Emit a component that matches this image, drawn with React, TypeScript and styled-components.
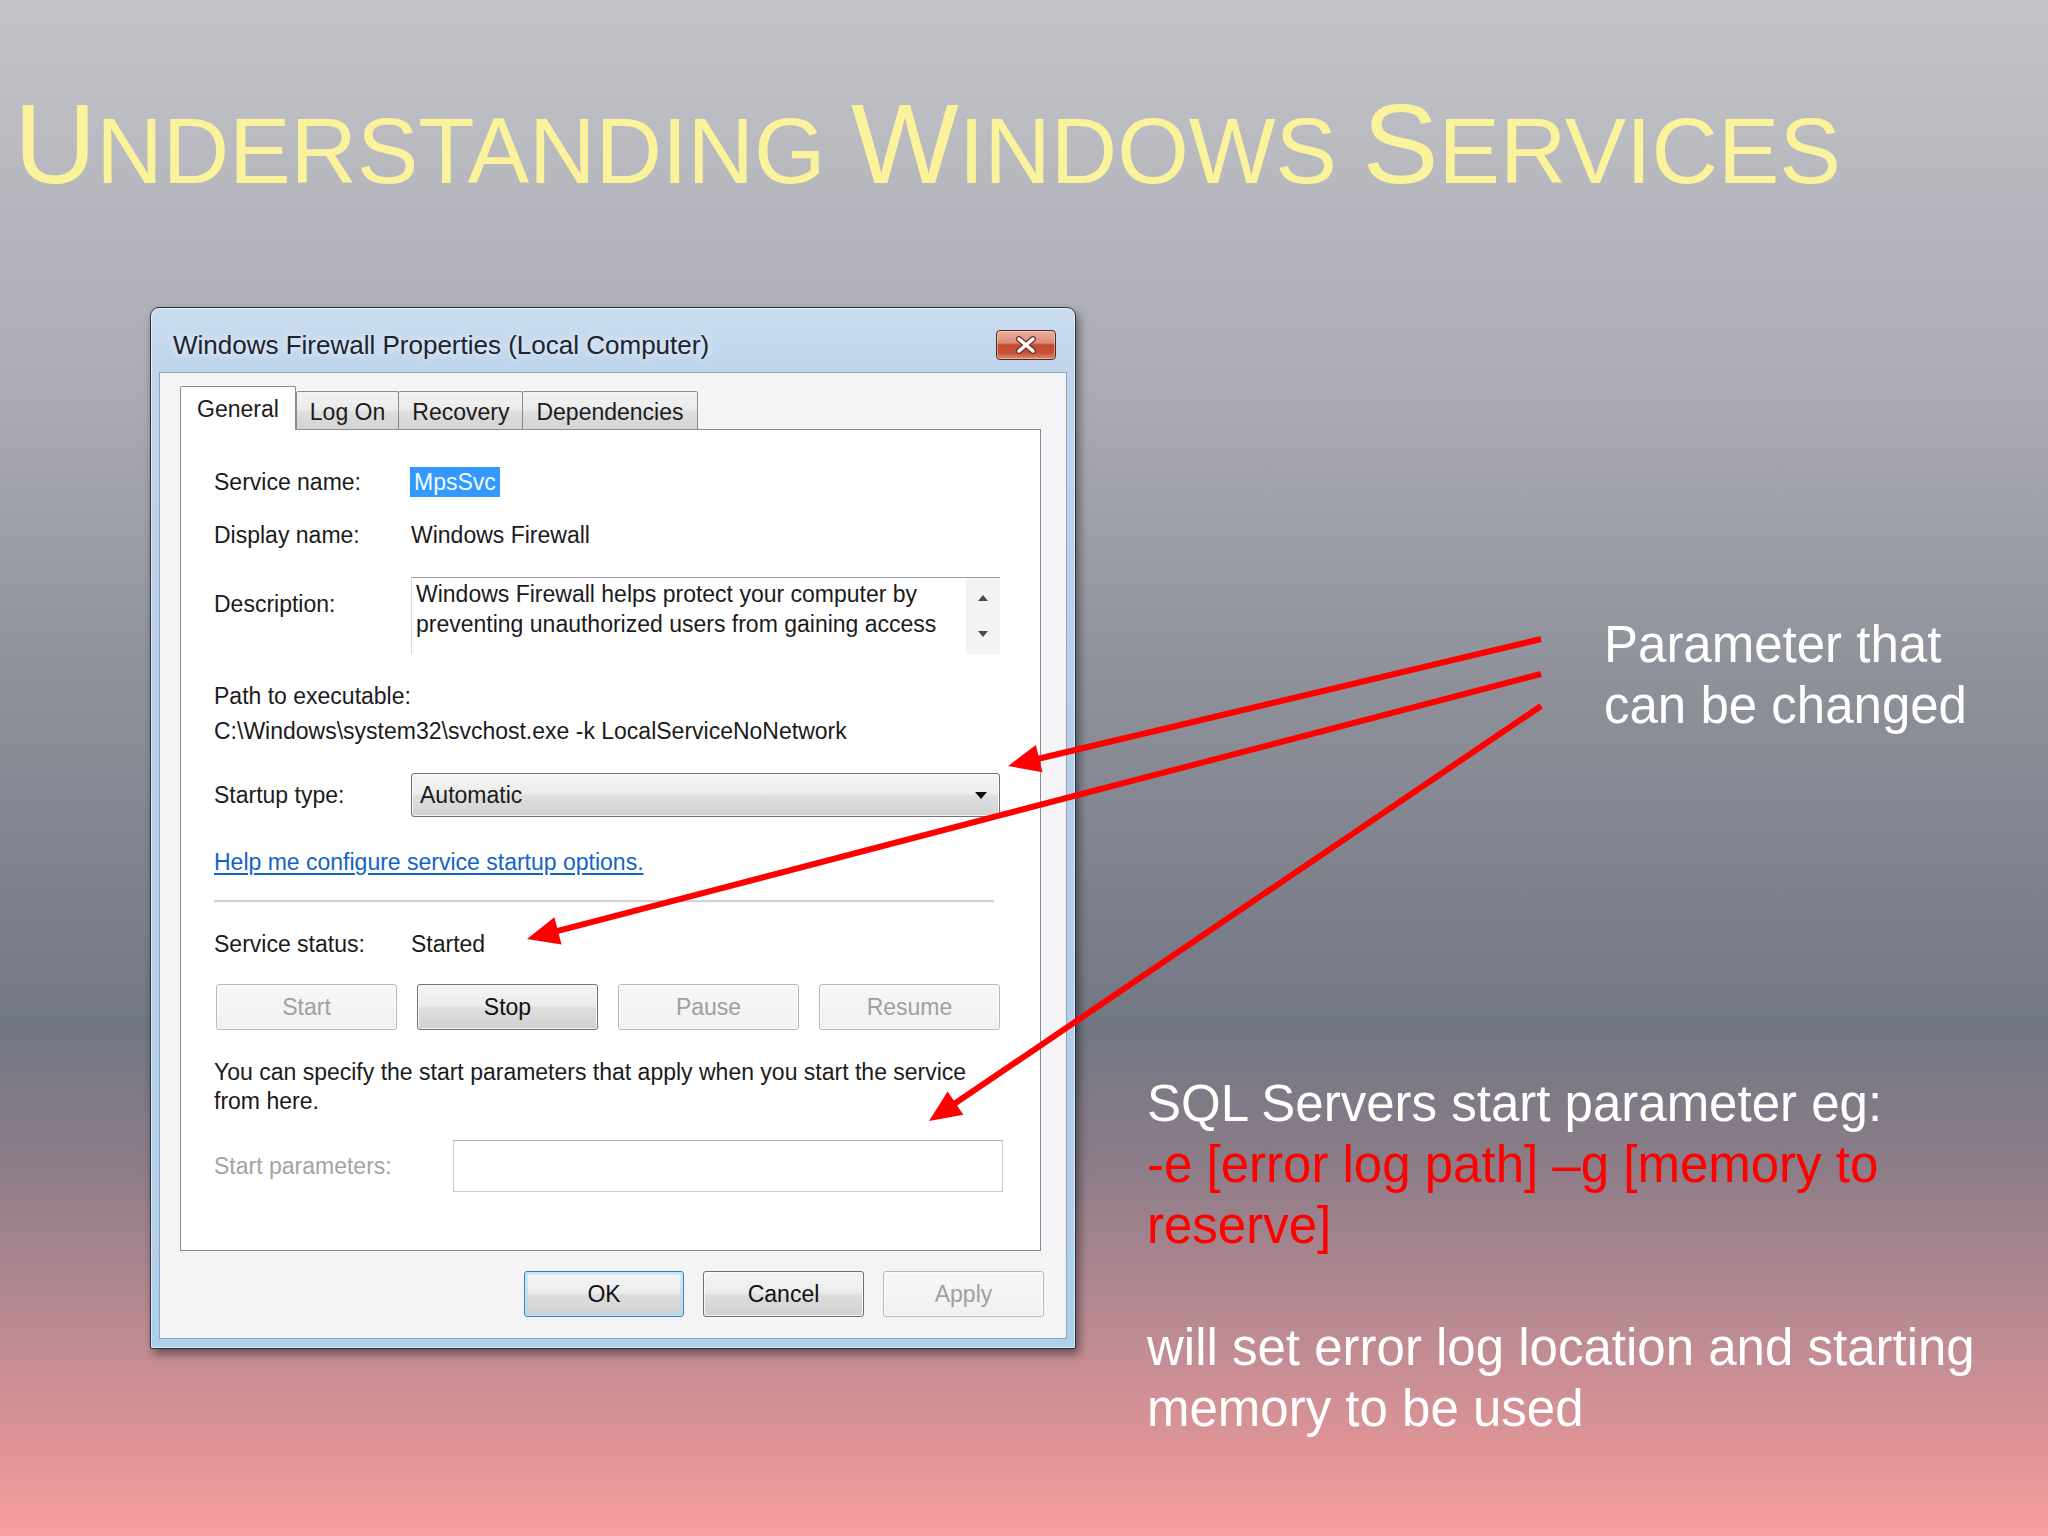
import styled, { createGlobalStyle } from 'styled-components';

const GlobalStyle = createGlobalStyle`
  html, body {
    margin: 0;
    padding: 0;
  }
  body {
    width: 2048px;
    height: 1536px;
    overflow: hidden;
    font-family: "Liberation Sans", Arial, sans-serif;
  }
`

const Slide = styled.div`
  position: relative;
  width: 2048px;
  height: 1536px;
  overflow: hidden;
  font-family: "Liberation Sans", Arial, sans-serif;
  background: linear-gradient(180deg, #c3c3c9 0%, #abacb4 25%, #8e9099 45%, #727784 67%, #8c7d88 76%, #b98a92 86%, #e29597 95%, #f7a19f 100%);
`

const Title = styled.h1`
  margin: 0;
  padding: 86px 0 0 14px;
  height: 115px;
  font-size: 114px;
  font-weight: normal;
  line-height: 115px;
  color: #fbf39b;
  white-space: nowrap;
`
const Cap = styled.span`
  font-size: 114px;
`
const SmallCap = styled.span`
  font-size: 92px;
`

const Body = styled.div`
  display: flex;
  align-items: flex-start;
  margin-top: 106px;
`

/* ---------- the Vista dialog ---------- */

const Window = styled.div`
  box-sizing: border-box;
  margin-left: 150px;
  width: 926px;
  height: 1042px;
  display: flex;
  flex-direction: column;
  border: 1px solid #2c323c;
  border-radius: 9px 9px 2px 2px;
  background: linear-gradient(180deg, #cadcef 0%, #bfd5ec 6%, #b6cfe9 40%, #b3cfea 90%, #a9d0ec 100%);
  box-shadow: inset 0 0 0 1px rgba(255, 255, 255, 0.55), 3px 5px 10px rgba(0, 0, 0, 0.45);
`
const TitleBar = styled.div`
  height: 64px;
  flex: none;
  box-sizing: border-box;
  display: flex;
  justify-content: space-between;
  align-items: flex-start;
  padding: 22px 19px 0 22px;
`
const Caption = styled.div`
  font-size: 26px;
  line-height: 30px;
  color: #1c2430;
  text-shadow: 0 0 8px rgba(255, 255, 255, 0.9);
`
const CloseButton = styled.div`
  box-sizing: border-box;
  width: 60px;
  height: 30px;
  display: flex;
  align-items: center;
  justify-content: center;
  border: 1px solid #4a2a22;
  border-radius: 4px;
  background: linear-gradient(180deg, #eab0a2 0%, #dc8c78 42%, #c44a2f 50%, #c6513a 78%, #e28c68 100%);
  box-shadow: inset 0 0 0 1px rgba(255, 220, 200, 0.5);
`

const Client = styled.div`
  box-sizing: border-box;
  flex: 1;
  margin: 0 8px 9px 8px;
  padding: 13px 25px 0 20px;
  display: flex;
  flex-direction: column;
  background: #f4f3f5;
  border: 1px solid #8ea5c1;
  font-size: 23px;
  color: #1b1b1b;
`

const TabStrip = styled.div`
  display: flex;
  align-items: flex-end;
  height: 44px;
  flex: none;
  margin-bottom: -1px;
  position: relative;
  z-index: 1;
`
const Tab = styled.div<{ $active?: boolean }>`
  box-sizing: border-box;
  height: ${p => (p.$active ? 44 : 39)}px;
  padding: ${p => (p.$active ? '0 16px' : '2px 13px 0')};
  margin-left: ${p => (p.$active ? 0 : -1)}px;
  display: flex;
  align-items: center;
  border: 1px solid #898c95;
  border-bottom: ${p => (p.$active ? 'none' : '1px solid #898c95')};
  border-radius: 2px 2px 0 0;
  background: ${p => (p.$active ? '#ffffff' : 'linear-gradient(180deg, #f3f3f3 0%, #ebebeb 48%, #dedede 52%, #d4d4d4 100%)')};
  line-height: 30px;
  &:nth-child(2) {
    margin-left: 0;
  }
`

const Panel = styled.div`
  box-sizing: border-box;
  height: 822px;
  flex: none;
  border: 1px solid #898c95;
  background: #ffffff;
  padding: 37px 40px 0 33px;
  display: flex;
  flex-direction: column;
`

const Field = styled.div<{ $gap?: number; $label?: number; $top?: boolean }>`
  display: grid;
  grid-template-columns: ${p => p.$label ?? 197}px 1fr;
  align-items: ${p => (p.$top ? 'start' : 'center')};
  margin-top: ${p => p.$gap ?? 0}px;
  line-height: 30px;
`
const Line = styled.div<{ $gap?: number }>`
  margin-top: ${p => p.$gap ?? 0}px;
  line-height: 30px;
  white-space: nowrap;
`
const Label = styled.div<{ $dim?: boolean; $pad?: number }>`
  color: ${p => (p.$dim ? '#a3a3a3' : '#1b1b1b')};
  padding-top: ${p => p.$pad ?? 0}px;
  white-space: nowrap;
`
const Selected = styled.span`
  display: inline-block;
  padding: 0 4px;
  margin-left: -1px;
  background: #3399ff;
  color: #f4faff;
`

const DescBox = styled.div`
  box-sizing: border-box;
  height: 77px;
  display: flex;
  border-top: 1px solid #9fa2a8;
  border-left: 1px solid #d6d9df;
  background: #ffffff;
`
const DescText = styled.div`
  flex: 1;
  padding: 1px 0 0 4px;
  line-height: 30px;
  white-space: nowrap;
  overflow: hidden;
`
const ScrollBar = styled.div`
  width: 34px;
  flex: none;
  display: flex;
  flex-direction: column;
  align-items: center;
  gap: 30px;
  padding-top: 17px;
  background: #f3f3f4;
`
const ScrollArrow = styled.div<{ $down?: boolean }>`
  width: 0;
  height: 0;
  border-left: 5px solid transparent;
  border-right: 5px solid transparent;
  ${p => (p.$down ? 'border-top: 6px solid #4a4a4a;' : 'border-bottom: 6px solid #4a4a4a;')}
`

const ComboBox = styled.div`
  box-sizing: border-box;
  height: 44px;
  display: flex;
  align-items: center;
  justify-content: space-between;
  padding: 0 12px 0 8px;
  border: 1px solid #707070;
  border-radius: 3px;
  background: linear-gradient(180deg, #f4f4f4 0%, #ececec 48%, #dfdfdf 52%, #d2d2d2 100%);
  box-shadow: inset 0 0 0 1px rgba(255, 255, 255, 0.7);
`
const DropArrow = styled.div`
  width: 0;
  height: 0;
  border-left: 6px solid transparent;
  border-right: 6px solid transparent;
  border-top: 7px solid #111;
`

const HelpLink = styled.a`
  color: #1463c8;
  text-decoration: underline;
  text-underline-offset: 3px;
  cursor: pointer;
`

const Separator = styled.div`
  margin-top: 23px;
  margin-right: 6px;
  height: 2px;
  background: #d2d2d2;
  border-bottom: 1px solid #f6f6f6;
`

const ButtonRow = styled.div<{ $gap?: number }>`
  display: grid;
  grid-template-columns: repeat(4, 1fr);
  gap: 20px;
  margin-top: ${p => p.$gap ?? 0}px;
  padding-left: 2px;
`
const UIButton = styled.div<{ $kind?: 'normal' | 'disabled' | 'default'; $w?: number }>`
  box-sizing: border-box;
  height: 46px;
  ${p => (p.$w ? `width: ${p.$w}px;` : '')}
  display: flex;
  align-items: center;
  justify-content: center;
  border-radius: 3px;
  border: 1px solid ${p => (p.$kind === 'disabled' ? '#b5b9bc' : p.$kind === 'default' ? '#3c7fb1' : '#707070')};
  color: ${p => (p.$kind === 'disabled' ? '#a0a0a0' : '#111111')};
  background: ${p =>
    p.$kind === 'disabled'
      ? 'linear-gradient(180deg, #f7f7f7 0%, #f1f1f1 100%)'
      : 'linear-gradient(180deg, #f4f4f4 0%, #ececec 48%, #dedede 52%, #d0d0d0 100%)'};
  box-shadow: ${p =>
    p.$kind === 'default'
      ? 'inset 0 0 0 1px #bfe8fb, inset 0 0 0 3px rgba(160, 220, 250, 0.5)'
      : 'inset 0 0 0 1px rgba(255, 255, 255, 0.75)'};
`

const Paragraph = styled.div`
  margin-top: 28px;
  line-height: 29px;
  white-space: nowrap;
`
const ParamInput = styled.div`
  box-sizing: border-box;
  height: 52px;
  margin-right: -3px;
  background: #ffffff;
  border: 1px solid #c9ccd1;
  border-top-color: #a9acb2;
`

const Footer = styled.div`
  display: flex;
  justify-content: flex-end;
  gap: 19px;
  margin-top: 20px;
  margin-right: -3px;
`

/* ---------- slide notes ---------- */

const Notes = styled.div`
  display: flex;
  flex-direction: column;
  padding-left: 71px;
  margin-top: 307px;
  color: #ffffff;
  font-size: 51px;
  line-height: 61px;
  white-space: nowrap;
`
const Note = styled.div<{ $indent?: number; $gap?: number }>`
  padding-left: ${p => p.$indent ?? 0}px;
  margin-top: ${p => p.$gap ?? 0}px;
`
const Red = styled.span`
  color: #ff0000;
`

const Overlay = styled.svg`
  position: absolute;
  left: 0;
  top: 0;
  pointer-events: none;
`

type ArrowProps = { x1: number; y1: number; x2: number; y2: number };

const Arrow = ({ x1, y1, x2, y2 }: ArrowProps) => {
  const dx = x2 - x1;
  const dy = y2 - y1;
  const len = Math.hypot(dx, dy);
  const ux = dx / len;
  const uy = dy / len;
  const head = 32;
  const half = 14;
  const bx = x2 - ux * head;
  const by = y2 - uy * head;
  const px = -uy * half;
  const py = ux * half;
  return (
    <g>
      <line x1={x1} y1={y1} x2={bx + ux * 4} y2={by + uy * 4} stroke="#ff0000" strokeWidth={6} />
      <polygon points={`${x2},${y2} ${bx + px},${by + py} ${bx - px},${by - py}`} fill="#ff0000" />
    </g>
  );
};

const App = () => {
  return (
    <Slide>
      <GlobalStyle />
      <Title>
        <Cap>U</Cap><SmallCap>NDERSTANDING </SmallCap>
        <Cap>W</Cap><SmallCap>INDOWS </SmallCap>
        <Cap>S</Cap><SmallCap>ERVICES</SmallCap>
      </Title>

      <Body>
        <Window>
          <TitleBar>
            <Caption>Windows Firewall Properties (Local Computer)</Caption>
            <CloseButton>
              <svg width="24" height="18" viewBox="0 0 24 18">
                <path d="M5 3 L19 15 M19 3 L5 15" stroke="#6b3327" strokeWidth="6" strokeLinecap="round" />
                <path d="M5 3 L19 15 M19 3 L5 15" stroke="#ffffff" strokeWidth="3.5" strokeLinecap="round" />
              </svg>
            </CloseButton>
          </TitleBar>

          <Client>
            <TabStrip>
              <Tab $active>General</Tab>
              <Tab>Log On</Tab>
              <Tab>Recovery</Tab>
              <Tab>Dependencies</Tab>
            </TabStrip>

            <Panel>
              <Field>
                <Label>Service name:</Label>
                <div><Selected>MpsSvc</Selected></div>
              </Field>
              <Field $gap={23}>
                <Label>Display name:</Label>
                <div>Windows Firewall</div>
              </Field>
              <Field $gap={27} $top>
                <Label $pad={12}>Description:</Label>
                <DescBox>
                  <DescText>
                    Windows Firewall helps protect your computer by<br />
                    preventing unauthorized users from gaining access
                  </DescText>
                  <ScrollBar>
                    <ScrollArrow />
                    <ScrollArrow $down />
                  </ScrollBar>
                </DescBox>
              </Field>
              <Line $gap={27}>Path to executable:</Line>
              <Line $gap={5}>C:\Windows\system32\svchost.exe -k LocalServiceNoNetwork</Line>
              <Field $gap={27}>
                <Label>Startup type:</Label>
                <ComboBox>
                  <span>Automatic</span>
                  <DropArrow />
                </ComboBox>
              </Field>
              <Line $gap={30}>
                <HelpLink>Help me configure service startup options.</HelpLink>
              </Line>
              <Separator />
              <Field $gap={26}>
                <Label>Service status:</Label>
                <div>Started</div>
              </Field>
              <ButtonRow $gap={25}>
                <UIButton $kind="disabled">Start</UIButton>
                <UIButton>Stop</UIButton>
                <UIButton $kind="disabled">Pause</UIButton>
                <UIButton $kind="disabled">Resume</UIButton>
              </ButtonRow>
              <Paragraph>
                You can specify the start parameters that apply when you start the service<br />
                from here.
              </Paragraph>
              <Field $gap={24} $label={239}>
                <Label $dim>Start parameters:</Label>
                <ParamInput />
              </Field>
            </Panel>

            <Footer>
              <UIButton $kind="default" $w={160}>OK</UIButton>
              <UIButton $w={161}>Cancel</UIButton>
              <UIButton $kind="disabled" $w={161}>Apply</UIButton>
            </Footer>
          </Client>
        </Window>

        <Notes>
          <Note $indent={457}>
            Parameter that<br />
            can be changed
          </Note>
          <Note $gap={337}>
            SQL Servers start parameter eg:<br />
            <Red>-e [error log path] –g [memory to<br />reserve]</Red><br />
            <br />
            will set error log location and starting<br />
            memory to be used
          </Note>
        </Notes>
      </Body>

      <Overlay width={2048} height={1536} viewBox="0 0 2048 1536">
        <Arrow x1={1541} y1={639} x2={1008} y2={766} />
        <Arrow x1={1541} y1={674} x2={527} y2={939} />
        <Arrow x1={1541} y1={706} x2={929} y2={1121} />
      </Overlay>
    </Slide>
  );
};

export default App;
